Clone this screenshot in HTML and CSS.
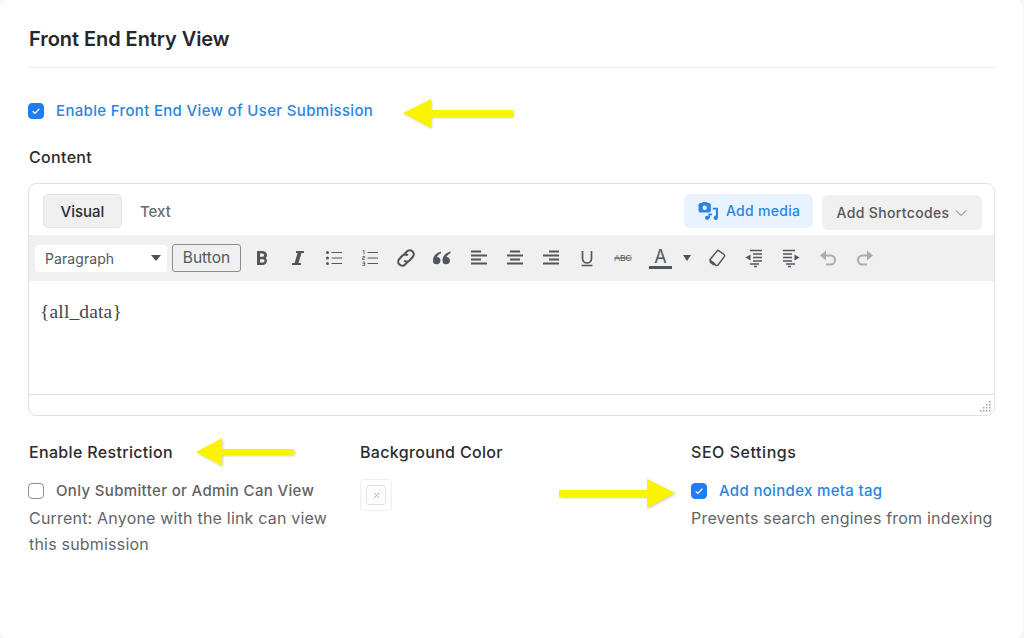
FILE: index.html
```html
<!DOCTYPE html>
<html lang="en">
<head>
<meta charset="utf-8">
<title>Front End Entry View</title>
<link rel="stylesheet" href="styles.css">
</head>
<body>
<main class="card">
  <h1 class="title">Front End Entry View</h1>
  <div class="check-row main-check">
    <span class="box on"><svg viewBox="0 0 16 16"><path d="M4.200 8.300l2.600 2.500 5-5.400"/></svg></span>
    <span class="link">Enable Front End View of User Submission</span>
  </div>
  <svg class="arrow arrow-1" viewBox="0 0 112 32"><path d="M1 15L29 1V12H111V19H29V30Z"/></svg>
  <h2 class="label content-label">Content</h2>
  <section class="editor">
    <div class="editor-top">
      <button class="tab active">Visual</button>
      <span class="tab">Text</span>
      <span class="spacer"></span>
      <button class="media">
        <svg viewBox="0 0 22 20"><path d="M2.500 1h1.500l1-1h4l1 1h1.500a2 2 0 0 1 2 2v6a2 2 0 0 1-2 2h-9a2 2 0 0 1-2-2V3a2 2 0 0 1 2-2zm4.500 2.800a2.300 2.300 0 1 0 0 4.600 2.300 2.300 0 0 0 0-4.600z"/><path d="M15.500 6h5.500v10.500a2.300 2.300 0 1 1-2.200-2.200V8h-3.300zM9.500 14.500a2.200 2.200 0 1 1 0 4.400 2.200 2.200 0 0 1 0-4.400z"/><path d="M10.800 12h4v2h-2.300v3h-1.700z"/></svg>
        Add media
      </button>
      <button class="shortcodes">Add Shortcodes <svg viewBox="0 0 12 8"><path d="M1 1.500l5 5 5-5"/></svg></button>
    </div>
    <div class="toolbar">
      <div class="select">Paragraph<i class="caret"></i></div>
      <button class="tb-button">Button</button>
      <span class="icons">
        <svg class="ic" viewBox="0 0 20 20"><path class="f" d="M5 3h6a4 4 0 0 1 2.700 6.900A4.200 4.200 0 0 1 11.500 17H5zm3 2.600v3.100h2.500a1.550 1.550 0 0 0 0-3.100zm0 5.600v3.200h3a1.600 1.600 0 0 0 0-3.200z"/></svg>
        <svg class="ic" viewBox="0 0 20 20"><path class="f" d="M8 3h8v2h-2.500l-3 10H13v2H4v-2h2.600l3-10H8z"/></svg>
        <svg class="ic" viewBox="0 0 20 20"><g class="s thin"><path d="M7.500 4.500H18M7.500 10H18M7.500 15.500H18"/></g><circle class="f" cx="3.500" cy="4.500" r="1.500"/><circle class="f" cx="3.500" cy="10" r="1.500"/><circle class="f" cx="3.500" cy="15.500" r="1.500"/></svg>
        <svg class="ic" viewBox="0 0 20 20"><g class="s thin"><path d="M7.500 4.500H18M7.500 10H18M7.500 15.500H18"/></g><g class="s nums"><path d="M3 2.500h1v4M2.500 8.500h2.200v1.500H2.500v1.500h2.200M2.500 14h2.200v3.500H2.500M2.500 15.700h2.200"/></g></svg>
        <svg class="ic" viewBox="0 0 20 20"><g class="s link-ic"><path d="M8.200 6.400l2.700-2.800a3.900 3.900 0 0 1 5.800 5.400l-3.200 3.400a3.900 3.900 0 0 1-5.300.1"/><path d="M11.800 13.600l-2.700 2.800a3.900 3.900 0 0 1-5.800-5.400l3.200-3.400a3.900 3.900 0 0 1 5.300-.1"/></g></svg>
        <svg class="ic" viewBox="0 0 20 20"><path class="f" d="M9 3.500C4.500 5 1 7.500 1 12.500a3.700 3.700 0 1 0 4-3.600c.4-1.300 2-2.700 4-3.600zM18.500 3.500C14 5 10.500 7.500 10.500 12.500a3.700 3.700 0 1 0 4-3.600c.4-1.300 2-2.700 4-3.600z"/></svg>
        <svg class="ic" viewBox="0 0 20 20"><path class="s bar" d="M2 3.500h10M2 7.500h16M2 11.500h10M2 15.500h16"/></svg>
        <svg class="ic" viewBox="0 0 20 20"><path class="s bar" d="M5 3.500h10M2 7.500h16M5 11.500h10M2 15.500h16"/></svg>
        <svg class="ic" viewBox="0 0 20 20"><path class="s bar" d="M8 3.500h10M2 7.500h16M8 11.500h10M2 15.500h16"/></svg>
        <svg class="ic" viewBox="0 0 20 20"><path class="s under" d="M5.500 3v7.500a4.500 4.500 0 0 0 9 0V3M4.500 17.500h11"/></svg>
        <svg class="ic" viewBox="0 0 20 20"><text class="abc" x="10" y="13.400" text-anchor="middle">ABC</text><path class="s strike" d="M1 10h18"/></svg>
        <span class="color-a">A</span>
        <i class="caret small"></i>
        <svg class="ic wide" viewBox="0 0 20 20"><path class="s eraser-p" d="M12 2.800l5 3.700a1.500 1.500 0 0 1 .3 2.100L11 17a1.500 1.500 0 0 1-2.100.3l-5.300-3.900a1.500 1.500 0 0 1-.3-2.100L9.900 3.100a1.500 1.500 0 0 1 2.100-.3z"/><path class="f" d="M3.300 11.500L8.500 15.400 6.500 17.500 2.500 14.500z"/></svg>
        <svg class="ic wide" viewBox="0 0 20 20"><path class="s bar2" d="M6 2.500h12M9 6h9M9 9.500h9M9 13h9M6 16h9M10 18.500h3"/><path class="f" d="M6.500 6.500v6L1.500 9.500z"/></svg>
        <svg class="ic wide" viewBox="0 0 20 20"><path class="s bar2" d="M2 2.500h12M2 6h9M2 9.500h9M2 13h9M5 16h9M7 18.500h3"/><path class="f" d="M13.500 6.500v6l5-3z"/></svg>
        <svg class="ic wide dim" viewBox="0 0 20 20"><path class="s undo" d="M7 7.500h5.500a4.500 4.500 0 0 1 0 9H8"/><path class="fd" d="M8 2.500L2 7.500l6 5z"/></svg>
        <svg class="ic dim" viewBox="0 0 20 20"><path class="s undo" d="M13 7.500H7.500a4.500 4.500 0 0 0 0 9H12"/><path class="fd" d="M12 2.500l6 5-6 5z"/></svg>
      </span>
    </div>
    <div class="editor-body">{all_data}</div>
    <div class="status">
      <svg class="grip" viewBox="0 0 12 12"><path d="M10 1h1.500v1.500H10zM7 4h1.500v1.500H7zM10 4h1.500v1.500H10zM4 7h1.500v1.500H4zM7 7h1.500v1.500H7zM10 7h1.500v1.500H10zM1 10h1.500v1.500H1zM4 10h1.500v1.500H4zM7 10h1.500v1.500H7zM10 10h1.500v1.500H10z"/></svg>
    </div>
  </section>
  <div class="columns">
    <div class="col">
      <div class="label-row">
        <h2 class="label">Enable Restriction</h2>
        <svg class="arrow arrow-2" viewBox="0 0 100 30"><path d="M1 15L27 1V12H99V18H27V29Z"/></svg>
      </div>
      <div class="check-row"><span class="box"></span><span class="muted-strong">Only Submitter or Admin Can View</span></div>
      <p class="help">Current: Anyone with the link can view<br>this submission</p>
    </div>
    <div class="col">
      <h2 class="label">Background Color</h2>
      <div class="swatch"><span class="swatch-inner"><svg viewBox="0 0 10 10"><path d="M2 2l6 6M8 2l-6 6"/></svg></span></div>
    </div>
    <div class="col seo">
      <h2 class="label seo-label">SEO Settings</h2>
      <svg class="arrow arrow-3" viewBox="0 0 118 32"><path d="M117 15L89 1V12H1V19H89V30Z"/></svg>
      <div class="check-row"><span class="box on"><svg viewBox="0 0 16 16"><path d="M4.200 8.300l2.600 2.500 5-5.400"/></svg></span><span class="link">Add noindex meta tag</span></div>
      <p class="help">Prevents search engines from indexing</p>
    </div>
  </div>
</main>
</body>
</html>
```
FILE: styles.css
```css
* { box-sizing: border-box; }
html, body { margin: 0; height: 100%; }
body {
  background: #f6f6f7;
  font-family: Inter, "Liberation Sans", sans-serif;
  color: #2b2c2e;
  overflow: hidden;
}
.card {
  position: relative;
  width: 1023px;
  height: 638px;
  background: #fff;
  border-radius: 8px;
  padding: 27px 28px 0 28px;
}
.title {
  margin: 0;
  font-size: 20px;
  line-height: 24px;
  font-weight: 600;
  letter-spacing: -0.06px;
  color: #26272a;
  padding: 0 0 16px 1px;
  border-bottom: 1px solid #ececee;
}
.check-row {
  display: flex;
  align-items: center;
  gap: 12px;
  font-size: 15px;
  line-height: 20px;
}
.main-check { margin-top: 33px; }
.box {
  width: 16px;
  height: 16px;
  border-radius: 4px;
  border: 1px solid #8b8d92;
  background: #fff;
  flex: none;
  display: flex;
}
.box.on { background: #1f7cf2; border-color: #1f7cf2; }
.box svg { width: 14px; height: 14px; fill: none; stroke: #fff; stroke-width: 1.400; }
.link { color: #2c84e0; font-weight: 500; letter-spacing: 0.33px; }
.muted-strong { color: #606368; font-weight: 500; letter-spacing: 0.35px; }
.arrow { position: absolute; fill: #fbf400; filter: drop-shadow(1px 1px 1px rgba(120,120,60,.35)); }
.arrow-1 { left: 402px; top: 98px; width: 112px; height: 32px; }
.arrow-2 { left: 195px; top: 437px; width: 100px; height: 30px; }
.arrow-3 { left: 558px; top: 478px; width: 118px; height: 32px; }
.label {
  margin: 0;
  font-size: 16px;
  line-height: 20px;
  font-weight: 500;
  letter-spacing: 0.33px;
  color: #2b2c2e;
}
.seo-label { letter-spacing: 0.55px; }
.content-label { margin-top: 26px; padding-left: 1px; }
.editor {
  margin-top: 16px;
  border: 1px solid #e1e2e4;
  border-radius: 8px;
  height: 233px;
  display: flex;
  flex-direction: column;
  overflow: hidden;
}
.editor-top {
  height: 51px;
  flex: none;
  display: flex;
  align-items: flex-start;
  padding: 10px 12px 0 14px;
}
.tab {
  height: 34px;
  font: 500 15px/34px Inter, "Liberation Sans", sans-serif;
  padding: 0 17px;
  color: #6a6c70;
  border: 1px solid transparent;
  background: none;
  border-radius: 5px;
}
.tab.active { background: #f0f0f1; border-color: #e2e3e5; color: #2b2c2e; width: 79px; padding: 0; }
.spacer { flex: 1; }
.media {
  height: 34px;
  width: 129px;
  margin-right: 9px;
  background: #e8f3ff;
  border: 0;
  border-radius: 6px;
  color: #2c84e0;
  font: 500 14px/34px Inter, "Liberation Sans", sans-serif;
  letter-spacing: 0.3px;
  display: flex;
  align-items: center;
  gap: 7px;
  padding: 0 0 0 14px;
}
.media svg { width: 21px; height: 19px; fill: #2c84e0; fill-rule: evenodd; }
.shortcodes {
  height: 35px;
  width: 160px;
  margin-top: 1px;
  background: #f0f0f1;
  border: 0;
  border-radius: 6px;
  color: #55575b;
  font: 500 14px/35px Inter, "Liberation Sans", sans-serif;
  letter-spacing: 0.35px;
  display: flex;
  align-items: center;
  justify-content: center;
  gap: 6px;
  padding: 0;
}
.shortcodes svg { width: 12px; height: 8px; fill: none; stroke: #6c6e72; stroke-width: 1; }
.toolbar {
  height: 46px;
  flex: none;
  background: #f0f0f1;
  display: flex;
  align-items: center;
  padding: 0 0 0 6px;
}
.select {
  width: 132px;
  height: 27px;
  background: #fff;
  border-radius: 4px;
  font-size: 14px;
  letter-spacing: 0.08px;
  line-height: 27px;
  color: #55575b;
  padding-left: 10px;
  position: relative;
  display: flex;
  align-items: center;
  justify-content: space-between;
  padding-right: 6px;
}
.caret {
  width: 0;
  height: 0;
  border-left: 5px solid transparent;
  border-right: 5px solid transparent;
  border-top: 6px solid #4f5154;
}
.tb-button {
  margin-left: 5px;
  width: 69px;
  height: 28px;
  border: 1px solid #8a8c90;
  border-radius: 3px;
  background: transparent;
  color: #55575b;
  font: 400 15.500px/26px Inter, "Liberation Sans", sans-serif;
  padding: 0;
}
.icons { display: flex; align-items: center; margin-left: 11px; }
.ic { width: 20px; height: 20px; flex: none; margin-right: 16.100px; }
.ic.wide { margin-right: 17px; }
.f { fill: #50565b; }
.fd { fill: #a9abae; }
.s { fill: none; stroke: #50565b; }
.thin { stroke-width: 1.200; }
.nums { stroke-width: .8; }
.link-ic { stroke-width: 2.100; }
.bar { stroke-width: 1.800; }
.under { stroke-width: 1.700; }
.strike { stroke-width: 1; }
.bar2 { stroke-width: 1.500; }
.abc { font: 400 8.500px "Liberation Sans", sans-serif; fill: #50565b; }
.color-a {
  width: 23px;
  height: 21px;
  flex: none;
  border-bottom: 3px solid #50565b;
  color: #50565b;
  font-size: 18px;
  line-height: 18px;
  text-align: center;
  margin-right: 11px;
}
.caret.small { margin-right: 16px; border-left-width: 4.500px; border-right-width: 4.500px; }
.eraser-p { stroke-width: 1.500; }
.dim .s { stroke: #a9abae; }
.undo { stroke-width: 2; }
.editor-body {
  flex: 1;
  padding: 19px 11px 0;
  font: 19.500px/24px "Liberation Serif", serif;
  letter-spacing: 0.15px;
  color: #45474a;
}
.status {
  height: 21px;
  flex: none;
  border-top: 1px solid #e1e2e4;
  position: relative;
}
.grip { position: absolute; right: 3px; bottom: 3px; width: 12px; height: 12px; fill: #9b9da0; }
.columns {
  margin-top: 26px;
  display: grid;
  grid-template-columns: 331px 331px 1fr;
}
.col:first-child .label, .col:first-child .help { padding-left: 1px; }
.col:nth-child(2) { padding-left: 1px; }
.col:nth-child(3) { padding-left: 1px; }
.col .check-row { margin-top: 19px; }
.help {
  margin: 4px 0 0;
  font-size: 16px;
  letter-spacing: 0.2px;
  line-height: 26px;
  color: #63666a;
}
.seo .help { white-space: nowrap; }
.swatch {
  margin-top: 17px;
  width: 32px;
  height: 32px;
  border: 1px solid #eceded;
  border-radius: 4px;
  display: flex;
  align-items: center;
  justify-content: center;
}
.swatch-inner {
  width: 20px;
  height: 20px;
  border: 1px solid #dfe7e6;
  border-radius: 3px;
  display: flex;
  align-items: center;
  justify-content: center;
}
.swatch-inner svg { width: 9px; height: 9px; fill: none; stroke: #a4a6a8; stroke-width: 1; }
```
